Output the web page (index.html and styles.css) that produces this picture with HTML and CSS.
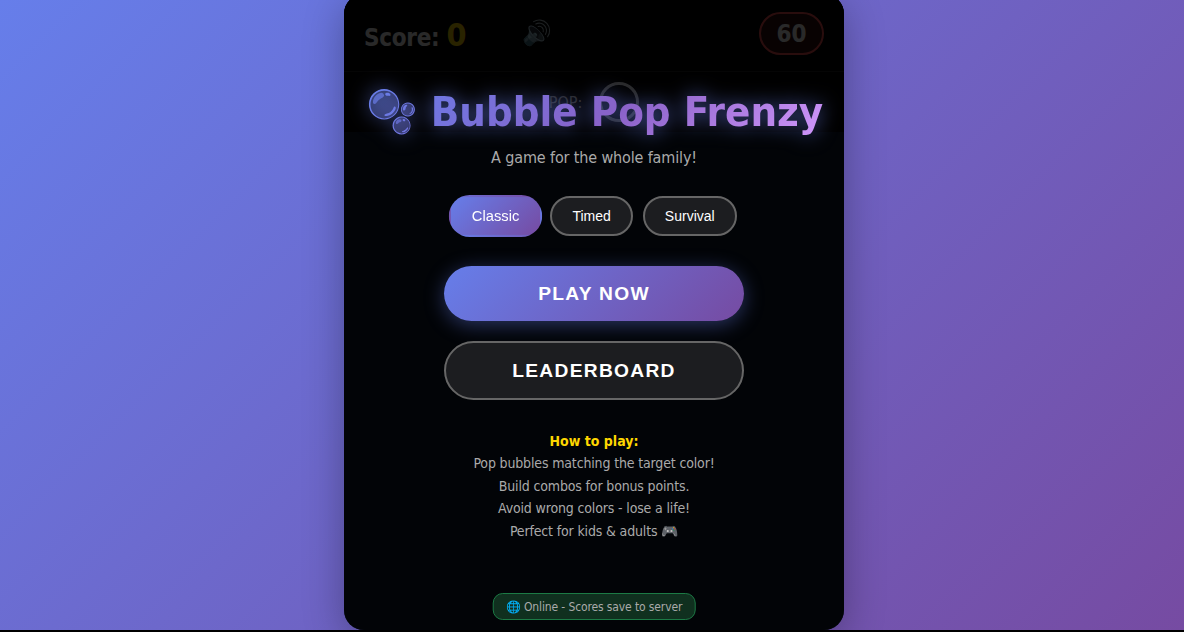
FILE: index.html
```html
<!DOCTYPE html>
<html lang="en">
<head>
<meta charset="utf-8">
<title>Bubble Pop Frenzy</title>
<link rel="stylesheet" href="styles.css">
</head>
<body>
<main class="game">
  <div class="hud">
    <div class="hud-left">
      <div class="score">Score: <span class="score-value">0</span></div>
      <button class="sound">🔊</button>
    </div>
    <div class="timer">60</div>
  </div>
  <div class="target"><span class="target-label">POP:</span><span class="target-ring"></span></div>
  <div class="overlay">
    <h1 class="title"><span class="title-text">🫧 Bubble Pop Frenzy</span></h1>
    <p class="tagline">A game for the whole family!</p>
    <div class="modes">
      <button class="mode mode-active">Classic</button>
      <button class="mode">Timed</button>
      <button class="mode">Survival</button>
    </div>
    <button class="cta cta-primary">PLAY NOW</button>
    <button class="cta cta-secondary">LEADERBOARD</button>
    <div class="help">
      <strong class="help-head">How to play:</strong><br>
      Pop bubbles matching the target color!<br>
      Build combos for bonus points.<br>
      Avoid wrong colors - lose a life!<br>
      Perfect for kids &amp; adults 🎮
    </div>
    <div class="status">🌐 Online - Scores save to server</div>
  </div>
</main>
</body>
</html>
```
FILE: styles.css
```css
* { box-sizing: border-box; }
html { background: #000; height: 100%; }
body {
  margin: 0;
  height: 630px;
  padding-left: 4px;
  overflow: hidden;
  background: linear-gradient(135deg, #667eea 0%, #764ba2 100%);
  display: flex;
  justify-content: center;
  align-items: flex-start;
  font-family: "DejaVu Sans Condensed", "DejaVu Sans", sans-serif;
}
.game {
  position: relative;
  flex: none;
  width: 500px;
  height: 636px;
  margin-top: -6px;
  border-radius: 20px;
  overflow: hidden;
  background: #111c30;
  box-shadow: 0 10px 40px rgba(0,0,0,.3);
}
.hud {
  height: 78px;
  padding: 18px 20px 0;
  display: flex;
  justify-content: space-between;
  align-items: flex-start;
  background: #000;
  color: #fff;
  border-bottom: 1px solid #222;
}
.hud-left { display: flex; align-items: flex-start; gap: 56px; padding-top: 7px; }
.score { font-size: 24px; font-weight: 700; line-height: 32px; letter-spacing: -0.3px; }
.score-value { color: #ffd700; font-size: 32px; }
.sound { background: none; border: 0; color: #fff; font-size: 24px; padding: 0; }
.timer {
  width: 65px; height: 43px; border-radius: 22px;
  border: 2px solid #ff5555; background: rgba(255,68,68,.2);
  color: #fff; font-size: 24px; font-weight: 700; text-align: center; line-height: 41px;
}
.target {
  height: 60px; display: flex; justify-content: center; align-items: center; gap: 17px;
  background: #000;
  color: #fff; font-size: 16px;
}
.target-ring { width: 40px; height: 40px; border-radius: 50%; border: 3px solid #fff; }
.overlay {
  position: absolute; inset: 0;
  background: rgba(0,0,0,.84);
  display: flex; flex-direction: column; align-items: center;
  padding-top: 90px;
  color: #fff;
}
.title {
  margin: 0; font-size: 41.6px; line-height: 55px; font-weight: 700; white-space: nowrap;
  padding-left: 1px;
  filter: drop-shadow(0 0 10px rgba(102,126,234,.7));
}
.title-text {
  background: linear-gradient(135deg, #667eea, #8a62c8 55%, #d096fa);
  -webkit-background-clip: text; background-clip: text;
  color: transparent;
}
.tagline { margin: 8px 0 0; font-size: 16px; line-height: 22px; color: #aaa; letter-spacing: -0.14px; }
.modes { display: flex; gap: 10px; align-items: center; margin-top: 27px; }
.mode {
  font-family: "Liberation Sans", sans-serif; font-size: 14px; color: #fff;
  height: 40px; padding: 0 20px; border-radius: 20px;
  border: 2px solid #666; background: #1c1d20;
}
.mode-active { border-color: transparent; background: linear-gradient(135deg, #667eea, #764ba2); transform: scale(1.05); }
.cta {
  font-family: "Liberation Sans", sans-serif; font-weight: 700; font-size: 19.2px; letter-spacing: 1.3px;
  color: #fff; width: 300px; border-radius: 30px;
}
.cta-primary {
  height: 55px; margin-top: 30px; border: 0;
  background: linear-gradient(135deg, #667eea, #764ba2);
  box-shadow: 0 4px 20px rgba(102,126,234,.4);
}
.cta-secondary { height: 59px; margin-top: 20px; border: 2px solid #666; background: #1c1d20; }
.help { margin-top: 30px; font-size: 14px; line-height: 22.4px; color: #aaa; text-align: center; letter-spacing: -0.15px; }
.help-head { color: #ffd700; letter-spacing: 0; }
.status {
  position: absolute; left: 50%; bottom: 10px; transform: translateX(-50%);
  height: 27px; padding: 0 12px; border-radius: 10px; white-space: nowrap;
  border: 1px solid #1c7a45; background: #10301f; color: #aaa; font-size: 12px; line-height: 27px; letter-spacing: -0.12px;
}
```
